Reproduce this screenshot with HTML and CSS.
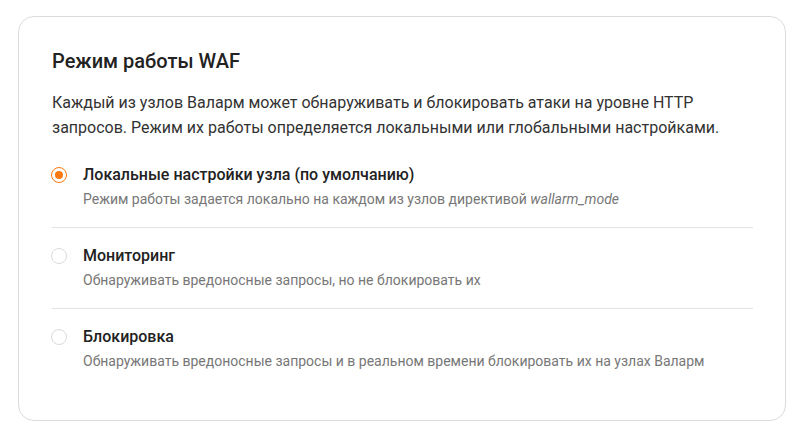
FILE: index.html
```html
<!DOCTYPE html>
<html lang="ru">
<head>
  <meta charset="UTF-8">
  <meta name="viewport" content="width=device-width, initial-scale=1">
  <title>Режим работы WAF</title>
  <link rel="stylesheet" href="styles.css">
</head>
<body>
  <div class="card">
    <h2 class="card-title">Режим работы WAF</h2>
    <p class="card-text">Каждый из узлов Валарм может обнаруживать и блокировать атаки на уровне HTTP запросов. Режим их работы определяется локальными или глобальными настройками.</p>

    <div class="options">
      <label class="option">
        <span class="radio checked"></span>
        <span class="option-body">
          <span class="option-label">Локальные настройки узла (по умолчанию)</span>
          <span class="option-desc">Режим работы задается локально на каждом из узлов директивой <em>wallarm_mode</em></span>
        </span>
      </label>
      <label class="option">
        <span class="radio"></span>
        <span class="option-body">
          <span class="option-label">Мониторинг</span>
          <span class="option-desc">Обнаруживать вредоносные запросы, но не блокировать их</span>
        </span>
      </label>
      <label class="option">
        <span class="radio"></span>
        <span class="option-body">
          <span class="option-label">Блокировка</span>
          <span class="option-desc">Обнаруживать вредоносные запросы и в реальном времени блокировать их на узлах Валарм</span>
        </span>
      </label>
    </div>
  </div>
</body>
</html>
```

FILE: styles.css
```css
:root {
  --text: #222222;
  --muted: #777777;
  --line: #e2e2e2;
  --accent: #fb7a12;
}

* {
  box-sizing: border-box;
  font-family: Roboto, 'Liberation Sans', sans-serif;
}

body {
  margin: 0;
  padding: 16px 19px 16px 18px;
  background: #ffffff;
  color: var(--text);
}

.card {
  border: 1px solid #dcdcdc;
  border-radius: 16px;
  padding: 31px 32px 31px 33px;
}

.card-title {
  margin: 0;
  font-size: 20px;
  line-height: 26px;
  font-weight: 500;
  color: var(--text);
}

.card-text {
  margin: 16px 0 0;
  font-size: 16px;
  line-height: 25px;
  color: #333333;
}

.options {
  margin-top: 7px;
}

.option {
  display: flex;
  align-items: flex-start;
  gap: 15px;
  padding: 18px 0;
  border-bottom: 1px solid var(--line);
  cursor: pointer;
}

.option:last-child {
  border-bottom: none;
}

.radio {
  flex: none;
  width: 16px;
  height: 16px;
  margin-top: 2px;
  margin-left: -1px;
  border: 1px solid #dadada;
  border-radius: 50%;
  display: flex;
  align-items: center;
  justify-content: center;
}

.radio.checked {
  border-color: var(--accent);
}

.radio.checked::after {
  content: "";
  width: 8px;
  height: 8px;
  border-radius: 50%;
  background: var(--accent);
}

.option-body {
  display: flex;
  flex-direction: column;
  gap: 4px;
  padding-left: 1px;
}

.option-label {
  font-size: 16px;
  line-height: 20px;
  font-weight: 500;
  color: var(--text);
}

.option-desc {
  font-size: 14px;
  line-height: 20px;
  color: var(--muted);
}
```
